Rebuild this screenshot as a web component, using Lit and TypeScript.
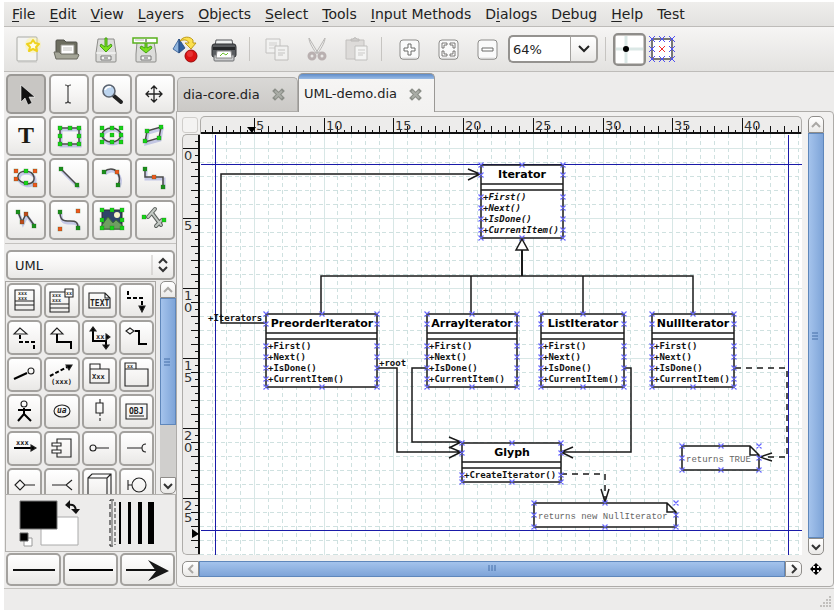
import { LitElement, html, svg, css } from "lit";
import { customElement, property, state } from "lit/decorators.js";
import { classMap } from "lit/directives/class-map.js";
import { styleMap } from "lit/directives/style-map.js";

/* ---------- small drawing helpers ---------- */

const GREEN = "#17d417";
const DARK_GREEN = "#1c8f1c";
const ORANGE = "#f0561c";

const dot = (x: number, y: number, fill = GREEN) =>
  svg`<rect x=${x - 2} y=${y - 2} width="4" height="4" fill=${fill} stroke="#1b5a1b" stroke-opacity=".45" stroke-width=".6"/>`;

const dots = (points: number[][], fill = GREEN) => points.map(([x, y]) => dot(x, y, fill));

const shaded = (d: string, fill = "none") => svg`
  <path d=${d} transform="translate(1 2)" fill="none" stroke="#5663c8" stroke-opacity=".3" stroke-width="3"/>
  <path d=${d} fill=${fill} stroke="#4a4a4a" stroke-width="1.5"/>`;

const cross = (x: number, y: number, r = 2) => `M${x - r} ${y - r}L${x + r} ${y + r}M${x - r} ${y + r}L${x + r} ${y - r}`;

/* ---------- main toolbar ---------- */

const toolbarIcons: Record<string, unknown> = {
  new: svg`
    <path d="M6 4h18q1 0 1 1v22q0 1-1 1H6q-1 0-1-1V5q0-1 1-1z" fill="#f4f4f2" stroke="#a9aaa6"/>
    <path d="M6 29h19" stroke="#c9c9c6"/>
    <circle cx="21" cy="12" r="8" fill="#fff27a" opacity=".35"/>
    <path d="M21 7l2 3 4 1-3 3 1 4-4-2-4 2 1-4-3-3 4-1z" fill="#fffce0" stroke="#efd21d" stroke-width="2" stroke-linejoin="round"/>`,
  open: svg`
    <path d="M5 24V8q0-1 1-1h7l2 2h10q1 0 1 1v14z" fill="#6c6d5f" stroke="#50514a"/>
    <path d="M10 12h13v11H10z" fill="#fff" stroke="#9a9a92"/>
    <path d="M12 15h9M12 17h9" stroke="#c4c4c0"/>
    <path d="M3 19h5l2 2h17l1 1-2 4H5z" fill="#a5a698" stroke="#6a6b60"/>`,
  save: svg`
    <path d="M8 6h16l2 14v8q0 1-1 1H7q-1 0-1-1v-8z" fill="#dcdcda" stroke="#8d8d8a"/>
    <path d="M6 20h20" stroke="#fff"/>
    <path d="M11 23h10v4H11z" fill="#f6f6f5" stroke="#777"/><path d="M14 25h4" stroke="#666"/>
    <path d="M15 5h2v9l4-3 1 2-6 6-6-6 1-2 4 3z" fill="#7be01f" stroke="#45a114"/>`,
  saveas: svg`
    <path d="M8 9h17l2 12v7q0 1-1 1H8q-1 0-1-1v-7z" fill="#dcdcda" stroke="#8d8d8a"/>
    <path d="M12 23h10v4H12z" fill="#f6f6f5" stroke="#777"/><path d="M15 25h4" stroke="#666"/>
    <path d="M16 9h2v6l4-2 1 2-6 5-6-5 1-2 4 2z" fill="#7be01f" stroke="#45a114"/>
    <path d="M4 5h24v5H4z" fill="#fff" stroke="#58b01c" stroke-width="1.5"/>
    <path d="M6 7h9" stroke="#bbb"/><path d="M17 6v3" stroke="#333"/>`,
  export: svg`
    <path d="M11 6L5 16l6 4z" fill="#8fb4dd" stroke="#2c568f" stroke-width=".8"/>
    <path d="M11 6l6 9-6 5z" fill="#2f609f" stroke="#24487a" stroke-width=".8"/>
    <path d="M12 8c3-5 10-5 13-1v3h3l-5 6-6-6h4c-1-3-5-4-9-2z" fill="#fbe04f" stroke="#b8920c" stroke-width=".9"/>
    <circle cx="23" cy="23" r="6" fill="#dc1212" stroke="#9b0808"/>
    <circle cx="22" cy="21" r="3" fill="#f04a4a" opacity=".6"/>`,
  print: svg`
    <path d="M9 7h16l1 6H8z" fill="#eef0f0" stroke="#55575a"/>
    <path d="M7 11h20q2 0 2 3v8q0 2-2 2H7q-2 0-2-2v-8q0-3 2-3z" fill="#5a5d60" stroke="#2e3032"/>
    <path d="M6 14h22v3H6z" fill="#26282a"/>
    <path d="M7 22h20v5q0 1-1 1H8q-1 0-1-1z" fill="#c9cacb" stroke="#6c6e70"/>
    <path d="M10 18h14l1 7H9z" fill="#fff" stroke="#888"/>
    <path d="M13 23l3-3 3 2 2-2" stroke="#6cc02c" fill="none"/>`,
  copy: svg`
    <g opacity=".8"><path d="M5 6h14v14H5z" fill="#f3f3f2" stroke="#b9b8b6"/>
    <path d="M8 10h8M8 12h8M8 15h6" stroke="#c9c8c6"/>
    <path d="M14 13h13v14H14z" fill="#f3f3f2" stroke="#b3b2b0"/>
    <path d="M17 17h7M17 20h7M17 22h5" stroke="#bdbcba"/></g>`,
  cut: svg`
    <path d="M9 5l9 15h-2C12 14 9 9 9 5zM25 5l-9 15h2c4-6 7-11 7-15z" fill="#eeeeed" stroke="#b9b7b5"/>
    <g fill="none" stroke="#b9b0b0" stroke-width="3"><circle cx="12" cy="23" r="3"/><circle cx="22" cy="23" r="3"/></g>`,
  paste: svg`
    <path d="M7 7h18v19H7z" fill="#dddbd9" stroke="#c2c0be"/>
    <path d="M12 8V6h2q2-3 4 0h2v2z" fill="#cfcdcb" stroke="#bcbab8"/>
    <path d="M16 13h12v14H16z" fill="#f4f4f3" stroke="#c0bfbd"/>
    <path d="M19 17h7M19 20h7M19 22h5" stroke="#cccbc9"/>`,
};

const zoomPlate = svg`
  <rect x="7" y="8" width="19" height="19" rx="4" fill="#bcbbb9"/>
  <rect x="7" y="7" width="19" height="19" rx="3" fill="#fafafa" stroke="#8d8c8a"/>
  <path d="M9 25h15" stroke="#e0dfde"/>`;

toolbarIcons.zoomin = svg`${zoomPlate}
  <path d="M15 11h3v4h4v3h-4v4h-3v-4h-4v-3h4z" fill="#fff" stroke="#6b6a68"/>`;
toolbarIcons.zoomfit = svg`${zoomPlate}
  <path d="M10 15v-5h5v2h-3v3zM18 10h5v5h-2v-3h-3zM10 18v5h5v-2h-3v-3zM18 23h5v-5h-2v3h-3z" fill="#fff" stroke="#6b6a68" stroke-width=".9"/>`;
toolbarIcons.zoomout = svg`${zoomPlate}
  <path d="M11 15h11v3H11z" fill="#fff" stroke="#6b6a68"/>`;

/* ---------- toolbox ---------- */

const grid3 = (xs: number[], ys: number[]) =>
  ys.flatMap((y, j) => xs.filter((_, i) => !(i === 1 && j === 1)).map((x) => [x, y]));

const tools: [string, unknown][] = [
  ["Modify", svg`<path d="M15 11v17l4-4 3 7 4-2-3-6h6z" fill="#111" stroke="#fff" stroke-opacity=".7" stroke-width=".8"/>`],
  ["Edit text", svg`<path d="M16 11q3 0 3 2v14q0 2-3 2M22 11q-3 0-3 2v14q0 2 3 2" fill="none" stroke="#444" stroke-width="1.2"/>`],
  ["Magnify", svg`
    <path d="M22 22l7 6" stroke="#222" stroke-width="4" stroke-linecap="round"/>
    <circle cx="17" cy="17" r="6" fill="#bcd4ee" stroke="#5c6470" stroke-width="1.6"/>
    <path d="M13 16q2-4 6-3" stroke="#fff" stroke-width="1.6" fill="none"/>`],
  ["Scroll", svg`<path d="M19 12v15M11 20h16M16 15l3-3 3 3M16 25l3 3 3-3M14 17l-3 3 3 3M24 17l3 3-3 3" fill="none" stroke="#222" stroke-width="1.3"/>`],
  ["Text", svg`<text x="20" y="27" text-anchor="middle" class="serif">T</text>`],
  ["Box", svg`${shaded("M11 12h19v16H11z")}${dots(grid3([11, 21, 30], [12, 20, 28]))}`],
  ["Ellipse", svg`${shaded("M10 19a9.5 7 0 0 1 19 0a9.5 7 0 0 1 -19 0z")}${dots([...grid3([10, 20, 29], [12, 19, 26]), [20, 19]])}`],
  ["Polygon", svg`${shaded("M12 15l14-4-2 11-14 4z")}${dots([[12, 15], [26, 11], [24, 22], [10, 25]])}`],
  ["Beziergon", svg`${shaded("M12 18c1-6 14-7 16 1c1 6-5 8-10 6c-5-2-7-4-6-7z")}${dots([[10, 13], [29, 13], [10, 21], [29, 27]], ORANGE)}${dots([[20, 13], [20, 25]])}`],
  ["Line", svg`${shaded("M12 11l17 17")}${dots([[12, 11], [28, 27]], DARK_GREEN)}`],
  ["Arc", svg`${shaded("M12 14c4-4 10-4 13 0s3 9 1 13")}${dots([[12, 14], [26, 27]], DARK_GREEN)}${dot(25, 14, ORANGE)}`],
  ["Zigzag line", svg`${shaded("M10 11v8h18v10")}${dots([[10, 11], [28, 29]], DARK_GREEN)}${dot(19, 19, ORANGE)}`],
  ["Polyline", svg`${shaded("M12 12l4 10 4-8 8 11")}${dots([[12, 12], [28, 26]], DARK_GREEN)}${dots([[16, 22], [20, 14]], "#c0481c")}`],
  ["Bezier line", svg`${shaded("M11 12c0 9 4 9 10 9s8 1 8 7")}${dots([[11, 12], [29, 28]], DARK_GREEN)}${dots([[29, 11], [11, 29]], ORANGE)}`],
  ["Image", svg`
    <path d="M10 10h20v19H10z" fill="#2f4468" stroke="#2a2f2a"/>
    <circle cx="25" cy="15" r="3" fill="#f6f3c8"/>
    <path d="M10 25l6-8 5 6 3-3 6 5v4H10z" fill="#6f9e62" stroke="#3d6a38"/>
    ${dots(grid3([10, 20, 30], [10, 20, 28]))}`],
  ["Outline", svg`
    <path d="M13 17l7-8M17 13l9 12M21 26l6-6" stroke="#5d625f" stroke-width="4" stroke-linecap="round"/>
    <path d="M13 17l7-8M17 13l9 12M21 26l6-6" stroke="#c3c9c4" stroke-width="2" stroke-linecap="round"/>
    ${dots([[9, 17], [29, 20]])}`],
];

/* ---------- UML palette ---------- */

const shapes: [string, unknown][] = [
  ["Class", svg`<path d="M8 7h19v20H8zM8 18h19M8 22h19"/><text x="11" y="12" class="tiny">xxx</text><text x="11" y="17" class="tiny">xxx</text>`],
  ["Template class", svg`<path d="M6 9h19v20H6zM6 21h19M6 25h19"/><text x="8" y="14" class="tiny">xxx</text><text x="8" y="19" class="tiny">xxx</text><path d="M21 6h8v8h-8z" fill="#fff"/><text x="22" y="12" class="tiny">xx</text>`],
  ["Note", svg`<path d="M7 10h16l5 5v10H7zM23 10v5h5"/><text x="8" y="23" class="wide">TEXT</text>`],
  ["Dependency", svg`<path d="M9 8v7h14v8" class="thick" stroke-dasharray="4 2"/><path d="M20 23h6l-3 6z" class="solid"/>`],
  ["Realizes", svg`<path d="M13 8l-6 6h13z"/><path d="M13 15v7h14v7" class="thick" stroke-dasharray="4 2"/>`],
  ["Generalization", svg`<path d="M13 8l-6 6h12z"/><path d="M13 14v8h14v7" class="thick"/>`],
  ["Association", svg`<path d="M11 9v12h13v6" class="thick"/><path d="M8 11l3-4 3 4zM21 25h6l-3 4zM24 14l4 3-4 3z" class="solid"/><text x="14" y="19">xx</text>`],
  ["Aggregation", svg`<path d="M7 11l4-3 4 3-4 3zM15 11h5" /><path d="M16 11h4v13h8" class="thick"/>`],
  ["Implements", svg`<path d="M7 22l13-6" class="thick"/><circle cx="24" cy="14" r="3"/>`],
  ["Constraint", svg`<path d="M6 19l17-9" class="thick" stroke-dasharray="4 2"/><path d="M22 8h6l-3 5z" class="solid"/><text x="7" y="27">(xxx)</text>`],
  ["Small package", svg`<path d="M8 12h19v14H8zM8 12V7h10v5"/><text x="10" y="22">Xxx</text>`],
  ["Large package", svg`<path d="M6 12h23v17H6zM6 12V6h11v6"/><text x="8" y="11" class="tiny">xx</text>`],
  ["Actor", svg`<circle cx="17" cy="10" r="3"/><path d="M17 14v6M11 16h13M17 20l-6 7M17 20l7 7" class="thick"/>`],
  ["Use case", svg`<ellipse cx="18" cy="17" rx="8" ry="6"/><text x="13" y="19" class="slant">ua</text>`],
  ["Lifeline", svg`<path d="M14 9h7v10h-7zM18 5v4"/><path d="M18 19v9" stroke-dasharray="3 2"/>`],
  ["Object", svg`<path d="M7 10h21v15H7z"/><text x="10" y="20" class="wide">OBJ</text><path d="M10 22h15"/>`],
  ["Message", svg`<path d="M7 17h18" class="thick"/><path d="M24 14l5 3-5 3z" class="solid"/><text x="9" y="14">xxx</text>`],
  ["Component", svg`<path d="M13 8h14v18H13z"/><path d="M8 12h9v3H8zM8 19h9v3H8z" fill="#fff"/>`],
  ["Provided interface", svg`<circle cx="11" cy="17" r="3"/><path d="M14 17h13"/>`],
  ["Required interface", svg`<path d="M8 17h15M27 13q-4 0-4 4t4 4"/>`],
  ["Composition", svg`<path d="M8 17l5-5 5 5-5 5zM18 17h10"/>`],
  ["Fork", svg`<path d="M8 17h14M28 12l-6 5 6 5"/>`],
  ["Node", svg`<path d="M6 10h19v25H6zM6 10l4-4h19v25M29 6l-4 4"/>`],
  ["Boundary", svg`<path d="M9 12v10M9 17h4"/><circle cx="20" cy="17" r="7"/>`],
];

/* ---------- diagram content ---------- */

interface UmlClass { name: string; x: number; y: number; w: number; h: number; ops: string[]; abstract?: boolean }

const OPS = ["+First()", "+Next()", "+IsDone()", "+CurrentItem()"];
const classes: UmlClass[] = [
  { name: "Iterator", x: 481, y: 165, w: 82, h: 73, ops: OPS, abstract: true },
  { name: "PreorderIterator", x: 266, y: 314, w: 111, h: 73, ops: OPS },
  { name: "ArrayIterator", x: 427, y: 314, w: 90, h: 73, ops: OPS },
  { name: "ListIterator", x: 541, y: 314, w: 83, h: 73, ops: OPS },
  { name: "NullIterator", x: 652, y: 314, w: 82, h: 73, ops: OPS },
  { name: "Glyph", x: 462, y: 443, w: 99, h: 39, ops: ["+CreateIterator()"] },
];
const notes = [
  { text: "returns TRUE", x: 682, y: 446, w: 77, h: 24 },
  { text: "returns new NullIterator", x: 534, y: 503, w: 142, h: 24 },
];

/* Screen position of a diagram unit */
const unitX = (n: number) => Math.round(184 + n * 13.95);
const unitY = (n: number) => Math.round(148 + n * 14);

const range = (from: number, to: number, step = 1) =>
  Array.from({ length: Math.max(0, Math.floor((to - from) / step) + 1) }, (_, i) => from + i * step);

const drawClass = (c: UmlClass) => {
  const mid = c.x + Math.round(c.w / 2);
  const rows = c.ops.map((_, i) => c.y + 32 + i * 11);
  const handles = [
    ...[c.y, c.y + c.h].flatMap((y) => [c.x, mid, c.x + c.w].map((x) => cross(x, y, 2.5))),
    ...[c.y + 10, ...rows].flatMap((y) => [c.x, c.x + c.w].map((x) => cross(x, y, 2.5))),
  ].join("");
  return svg`
    <rect x=${c.x} y=${c.y} width=${c.w} height=${c.h} class="box"/>
    <path d="M${c.x} ${c.y + 19}h${c.w}M${c.x} ${c.y + 25}h${c.w}" class="wire"/>
    <text x=${mid} y=${c.y + 13} class="title" text-anchor="middle">${c.name}</text>
    <path d=${handles} class="handle"/>
    ${c.ops.map((op, i) => svg`<text x=${c.x + 2} y=${c.y + 35 + i * 11} class=${c.abstract ? "op abstract" : "op"}>${op}</text>`)}`;
};

const drawNote = (n: (typeof notes)[number]) => {
  const right = n.x + n.w;
  const bottom = n.y + n.h;
  const handles = [n.y, n.y + 12, bottom]
    .flatMap((y, j) => [n.x, n.x + Math.round(n.w / 2), right].filter((_, i) => !(i === 1 && j === 1)).map((x) => cross(x, y, 2.5)))
    .join("");
  return svg`
    <path d="M${n.x} ${n.y}H${right - 9}l9 9V${bottom}H${n.x}zM${right - 9} ${n.y}v9h9" class="box"/>
    <text x=${n.x + 4} y=${n.y + 16} class="note">${n.text}</text>
    <path d=${handles} class="handle"/>`;
};

const buttonFace = css`
  button, select, input { font: inherit; color: inherit; margin: 0; padding: 0; }
  .face {
    border: 2px solid #a3a19e; border-radius: 5px;
    background: linear-gradient(#ffffff, #f6f5f4 50%, #e9e8e6);
    display: flex; align-items: center; justify-content: center; overflow: hidden;
  }
  svg { display: block; flex: none; }
`;

/* ---------- scrollbar ---------- */

@customElement("dia-scrollbar")
class DiaScrollbar extends LitElement {
  @property({ type: Boolean, reflect: true }) horizontal = false;
  @property({ type: Number }) thumb = 100;

  static styles = [buttonFace, css`
    :host { display: flex; flex-direction: column; box-sizing: border-box; min-width: 0; min-height: 0; }
    :host([horizontal]) { flex-direction: row; }
    .end { flex: 0 0 17px; box-sizing: border-box; border-width: 1px; border-color: #8f8d8a; width: 16px; height: 17px; }
    :host([horizontal]) .end { width: 17px; height: 16px; }
    .first { border-radius: 5px 5px 0 0; }
    .last { border-radius: 0 0 5px 5px; }
    :host([horizontal]) .first { border-radius: 5px 0 0 5px; }
    :host([horizontal]) .last { border-radius: 0 5px 5px 0; }
    .trough { flex: 1; display: flex; flex-direction: column; background: #d0cfcd; min-height: 0; }
    :host([horizontal]) .trough { flex-direction: row; }
    .thumb {
      box-sizing: border-box; border: 1px solid #5f87bb; display: flex; align-items: center; justify-content: center;
      background: linear-gradient(to right, #a4c3ec, #7ea4d8);
    }
    :host([horizontal]) .thumb { background: linear-gradient(#a4c3ec, #7ea4d8); }
  `];

  render() {
    const arrows = this.horizontal ? ["M10 4L6 8l4 4", "M6 4l4 4-4 4"] : ["M4 10l4-4 4 4", "M4 6l4 4 4-4"];
    const grip = this.horizontal ? "M1 0v6M4 0v6M7 0v6" : "M0 1h6M0 4h6M0 7h6";
    return html`
      <button class="face end first" aria-label="Scroll back">
        <svg width="16" height="16"><path d=${arrows[0]} fill="none" stroke="#aaa8a5" stroke-width="2"/></svg>
      </button>
      <div class="trough">
        <div class="thumb" style=${styleMap({ flexBasis: `${this.thumb}%` })}>
          <svg width="8" height="8"><path d=${grip} stroke="#456fa8"/></svg>
        </div>
      </div>
      <button class="face end last" aria-label="Scroll on">
        <svg width="16" height="16"><path d=${arrows[1]} fill="none" stroke="#333" stroke-width="2"/></svg>
      </button>`;
  }
}

/* ---------- menu and toolbar ---------- */

@customElement("dia-menubar")
class DiaMenubar extends LitElement {
  static styles = css`
    :host { display: block; }
    nav { display: flex; gap: 14px; padding: 0 8px; height: 24px; align-items: center; overflow: hidden;
      background: linear-gradient(#efeeec, #e3e2e0); border-bottom: 1px solid #bebcb9; }
    button { font: inherit; font-size: 14px; line-height: 20px; color: #222; border: 0; padding: 0; background: none; white-space: nowrap; }
    u { text-underline-offset: 2px; text-decoration-skip-ink: none; }
  `;
  render() {
    const items = ["_File", "_Edit", "_View", "_Layers", "_Objects", "_Select", "_Tools", "_Input Methods", "D_ialogs", "D_ebug", "_Help", "Test"];
    return html`<nav>${items.map((item) => {
      const at = item.indexOf("_");
      return html`<button>${at < 0 ? item : html`${item.slice(0, at)}<u>${item[at + 1]}</u>${item.slice(at + 2)}`}</button>`;
    })}</nav>`;
  }
}

@customElement("dia-toolbar")
class DiaToolbar extends LitElement {
  static styles = [buttonFace, css`
    :host { display: block; }
    .bar { display: flex; align-items: center; height: 44px; padding-left: 4px; overflow: hidden;
      background: linear-gradient(#f6f5f4, #e3e2e0); border-bottom: 1px solid #bebcb9; }
    .tool { width: 39px; height: 40px; border: 0; background: none; display: flex; align-items: center; justify-content: center; flex: none; }
    .sep { flex: none; width: 1px; height: 24px; margin: 0 7px; background: #c6c4c1; }
    .combo { flex: none; display: flex; width: 90px; height: 28px; box-sizing: border-box; margin-left: 2px; }
    .combo input { width: 0; flex: 1; box-sizing: border-box; border: 2px solid #94928f; border-right-width: 0; border-radius: 5px 0 0 5px; background: #fff; padding-left: 3px; font-size: 13px; }
    .drop { width: 28px; box-sizing: border-box; border-width: 2px; border-left: 1px solid #a3a19e; border-radius: 0 5px 5px 0; }
    .toggle { flex: none; width: 33px; height: 33px; background: #c9c7c4; box-sizing: border-box; border-color: #8f8d8a; }
    .snap { flex: none; width: 28px; height: 28px; margin-left: 2px; border: 0; background: none; }
  `];
  private group(names: string[]) {
    return names.map((name) => html`<button class="tool" aria-label=${name}>
      <svg width="32" height="32" fill="none">${toolbarIcons[name]}</svg></button>`);
  }
  render() {
    const marks = [4, 14, 24].flatMap((y) => [4, 14, 24].map((x) => [x, y])).filter(([x, y]) => !(x === 14 && y === 14));
    return html`<div class="bar">
      ${this.group(["new", "open", "save", "saveas", "export", "print"])}
      <span class="sep"></span>
      ${this.group(["copy", "cut", "paste"])}
      <span class="sep"></span>
      ${this.group(["zoomin", "zoomfit", "zoomout"])}
      <div class="combo">
        <input type="text" aria-label="Zoom" .value=${"64%"}>
        <button class="face drop" aria-label="Zoom levels"><svg width="14" height="12"><path d="M2 3l5 5 5-5" fill="none" stroke="#222" stroke-width="2"/></svg></button>
      </div>
      <span class="sep"></span>
      <button class="face toggle" aria-label="Snap to grid" aria-pressed="true">
        <svg width="27" height="27"><path d="M0 0h27v27H0z" fill="#fff"/><path d="M10 0v27M0 13h27" stroke="#dbe8e6" stroke-width="3"/><circle cx="10" cy="13" r="3" fill="#000"/></svg>
      </button>
      <button class="snap" aria-label="Snap to objects">
        <svg width="28" height="28"><path d="M4 4h20v20H4z" fill="#fff" stroke="#777" stroke-width="2"/>
          <path d=${marks.map(([x, y]) => cross(x, y, 3)).join("")} stroke="#5050f0" fill="none"/>
          <path d=${cross(14, 14, 3)} stroke="#f03030" fill="none"/></svg>
      </button>
    </div>`;
  }
}

/* ---------- toolbox column ---------- */

@customElement("dia-toolbox")
class DiaToolbox extends LitElement {
  static styles = [buttonFace, css`
    :host { display: flex; flex-direction: column; box-sizing: border-box; width: 172px; padding: 2px 0 2px 1px; min-height: 0; }
    .tools { display: grid; grid-template-columns: repeat(4, 1fr); gap: 2px 3px; margin: 0 1px; }
    .tool { height: 40px; box-sizing: border-box; }
    .active { background: #c8c6c3; border-color: #9b9996; }
    .serif { font: bold 24px "Liberation Serif", serif; fill: #1c1a14; }
    hr { width: 100%; height: 1px; border: 0; background: #c4c2bf; margin: 3px 0 6px; flex: none; }
    .sheet { position: relative; margin: 0 1px 1px; flex: none; }
    select { appearance: none; width: 100%; height: 30px; padding-left: 7px; font-size: 13px; text-align: left; box-sizing: border-box;
      border: 2px solid #a3a19e; border-radius: 5px; background: linear-gradient(#fff, #f6f5f4 50%, #e9e8e6); }
    .updown { position: absolute; right: 6px; top: 5px; pointer-events: none; }
    .palette { flex: 1; display: flex; gap: 4px; min-height: 0; }
    .shapes { flex: 1; border: 1px solid #a9a7a4; border-bottom: 0; padding: 1px; overflow: hidden; display: grid; grid-template-columns: repeat(4, 1fr); grid-auto-rows: 35px; gap: 2px; align-content: start; }
    .shape { min-width: 0; }
    .shape svg { fill: none; stroke: #222; stroke-width: 1.1; }
    .shape text { font: bold 7px "DejaVu Sans Mono", monospace; fill: #222; stroke: none; }
    .shape .slant { font-style: italic; font-size: 8px; }
    .shape .tiny { font-size: 5px; }
    .shape .wide { font-size: 8px; }
    .shape .thick { stroke-width: 2; stroke: #000; }
    .shape .solid { fill: #000; }
    .colors { flex: none; display: flex; justify-content: space-between; border: 1px solid #b3b1ae; height: 56px; margin-bottom: 1px; }
    .colors button { border: 0; background: none; }
    .lines { display: grid; grid-template-columns: repeat(3, 1fr); gap: 2px; margin: 0 1px; flex: none; }
    .line { height: 33px; box-sizing: border-box; }
    dia-scrollbar { flex: none; width: 16px; }
  `];
  render() {
    return html`
      <div class="tools">${tools.map(([name, icon], i) => html`
        <button class=${classMap({ face: true, tool: true, active: i === 0 })} aria-label=${name}>
          <svg width="40" height="40" viewBox="0 0 40 40" fill="none">${icon}</svg>
        </button>`)}</div>
      <hr>
      <div class="sheet">
        <select aria-label="Sheet"><option>UML</option></select>
        <svg class="updown" width="18" height="20"><path d="M1 0v20" stroke="#c4c2bf"/><path d="M8 8l4-4 4 4M8 12l4 4 4-4" fill="none" stroke="#333" stroke-width="2"/></svg>
      </div>
      <div class="palette">
        <div class="shapes">${shapes.map(([name, icon]) => html`
          <button class="face shape" aria-label=${name}><svg width="35" height="35">${icon}</svg></button>`)}</div>
        <dia-scrollbar .thumb=${71}></dia-scrollbar>
      </div>
      <div class="colors">
        <button aria-label="Foreground and background colours">
          <svg width="78" height="56">
            <path d="M35 22h37v28H35z" fill="#fff" stroke="#aaa"/>
            <path d="M14 6h37v28H14z" fill="#000" stroke="#777"/>
            <path d="M18 43h8v8h-8z" fill="#fff" stroke="#999"/>
            <path d="M14 38h8v8h-8z" fill="#000" stroke="#666"/>
            <path d="M62 10q8-2 8 7" fill="none" stroke="#111" stroke-width="2"/>
            <path d="M59 10l5-5v9zM65 14h9l-4 5z" fill="#111"/>
          </svg>
        </button>
        <button aria-label="Line width">
          <svg width="66" height="56">
            <path d="M5 5H1v46h4" fill="none" stroke="#111" stroke-dasharray="5 3"/>
            <path d="M3 6v44" stroke="#555"/><path d="M6 7v43" stroke="#333" stroke-dasharray="4 2"/>
            <path d="M10 7h2v42h-2zM19 7h3v42h-3zM29 7h4v42h-4zM39 7h6v42h-6z" fill="#000"/>
          </svg>
        </button>
      </div>
      <div class="lines">
        <button class="face line" aria-label="Start arrow"><svg width="50" height="28"><path d="M4 14h42" stroke="#111" stroke-width="2"/></svg></button>
        <button class="face line" aria-label="Line style"><svg width="50" height="28"><path d="M3 14h44" stroke="#000" stroke-width="2"/></svg></button>
        <button class="face line" aria-label="End arrow"><svg width="50" height="28"><path d="M3 14h32" stroke="#111" stroke-width="2"/><path d="M25 4l21 11-21 10 8-10z" fill="#181818"/></svg></button>
      </div>`;
  }
}

/* ---------- drawing area with rulers ---------- */

@customElement("dia-display")
class DiaDisplay extends LitElement {
  @state() private columns = 44;
  @state() private rows = 29;
  private observer?: ResizeObserver;

  static styles = [buttonFace, css`
    :host { display: flex; flex-direction: column; min-width: 0; min-height: 0; box-sizing: border-box; }
    .tabs { display: flex; align-items: flex-end; height: 38px; padding-left: 1px; padding-top: 1px; flex: none; }
    .tab { display: flex; align-items: center; justify-content: space-between; box-sizing: border-box; height: 34px; width: 121px; padding: 0 12px 0 5px;
      border: 1px solid #aeaca9; border-bottom: 0; border-radius: 5px 5px 0 0; background: linear-gradient(#d9d8d6, #cbc9c6); }
    .current { position: relative; z-index: 1; height: 39px; width: 137px; padding-top: 2px; margin-bottom: -1px; border-color: #9a9895;
      background: linear-gradient(#5f8cc8, #9bbce6 5px, #f6f5f4 5px, #f2f1f0); }
    .tab button { border: 0; background: none; font-size: 13px; line-height: 20px; color: #222; white-space: nowrap; }
    .page { flex: 1; min-height: 0; display: grid; grid-template-columns: 18px minmax(0, 1fr) 22px; grid-template-rows: 18px minmax(0, 1fr) 22px;
      padding: 4px 9px 9px 5px; border: 1px solid #aeaca9; border-radius: 0 4px 4px 4px; background: #f2f1f0; margin-bottom: 1px; }
    .corner { width: 16px; height: 16px; border: 1px solid #d0cecb; border-radius: 3px; box-sizing: border-box; margin-top: 1px; background: #f4f3f2; }
    .page > svg { width: 100%; height: 100%; overflow: hidden; }
    .ruler { background: #edeceb; border: 1px solid #aeaca9; box-sizing: border-box; font: 13px "DejaVu Sans", sans-serif; fill: #333; }
    .top { border-bottom: 0; border-radius: 5px 5px 0 0; }
    .side { border-right: 0; border-radius: 5px 0 0 5px; }
    .canvas { background: #fff; }
    .vertical { grid-column: 3; grid-row: 1 / 3; margin-left: 6px; width: 16px; }
    .across { grid-column: 1 / 3; grid-row: 3; margin-top: 6px; }
    .nav { grid-column: 3; grid-row: 3; margin: 6px 0 0 6px; border: 0; background: none; width: 16px; height: 16px; }
    .tick { stroke: #111; shape-rendering: crispEdges; fill: none; }
    .dashed { stroke: #cfe1e0; stroke-dasharray: 4 3; fill: none; shape-rendering: crispEdges; }
    .major { stroke: #d8e7e6; fill: none; shape-rendering: crispEdges; }
    .guide { stroke: #1a1aa8; fill: none; shape-rendering: crispEdges; }
    .wire { stroke: #1a1a1a; stroke-width: 1.5; fill: none; }
    .broken { stroke-dasharray: 6 5; }
    .bold { stroke-width: 2; }
    .box { stroke: #1a1a1a; stroke-width: 1.5; fill: #fff; }
    .handle { stroke: #6868ff; stroke-width: 1.2; fill: none; }
    .title { font: bold 11px "DejaVu Sans", sans-serif; fill: #000; }
    .op { font: bold 9px "DejaVu Sans Mono", monospace; fill: #111; }
    .abstract { font-style: italic; }
    .note { font: 9px "Liberation Mono", monospace; fill: #666; }
  `];

  connectedCallback() {
    super.connectedCallback();
    this.observer = new ResizeObserver(([entry]) => {
      this.columns = Math.floor((entry.contentRect.width - 40) / 13.95);
      this.rows = Math.floor((entry.contentRect.height - 107) / 14);
    });
    this.observer.observe(this);
  }

  disconnectedCallback() {
    this.observer?.disconnect();
    super.disconnectedCallback();
  }

  private tab(name: string, current: boolean) {
    return html`<div class=${classMap({ tab: true, current })}>
      <button role="tab" aria-selected=${current ? "true" : "false"}>${name}</button>
      <button aria-label="Close ${name}"><svg width="13" height="13"><path d="M3 3l7 7M10 3l-7 7" stroke="#8b8e88" stroke-width="4" stroke-linecap="square"/><path d="M3 3l7 7M10 3l-7 7" stroke="#a9aca6" stroke-width="2"/></svg></button>
    </div>`;
  }

  private rulers() {
    const top = range(1.5, this.columns + 1, 0.5).map((n) => `M${unitX(n)} ${n % 5 === 0 ? 118 : n % 1 === 0 ? 126 : 130}V134`).join("");
    const side = range(-1, this.rows + 1, 0.5).map((n) => `M${n % 5 === 0 ? 183 : n % 1 === 0 ? 191 : 195} ${unitY(n)}H199`).join("");
    return html`
      <svg class="ruler top"><g transform="translate(-201 -117)">
        <path class="tick" d=${top}/>
        <path d="M201 133H4000" class="tick" stroke-width="2"/>
        <path d="M247 127h9l-4 6z" fill="#000"/>
        ${range(5, this.columns - 1, 5).map((n) => svg`<text x=${unitX(n) + 2} y="130">${n}</text>`)}
      </g></svg>
      <svg class="ruler side"><g transform="translate(-183 -135)">
        <path class="tick" d=${side}/>
        <path d="M199 134V3000" class="tick" stroke-width="2"/>
        <path d="M192 529v9l7-4z" fill="#000"/>
        ${range(0, this.rows - 2, 5).map((n) => [...String(n)].map((digit, i) => svg`<text x="184" y=${unitY(n) + 12 + i * 12}>${digit}</text>`))}
      </g></svg>`;
  }

  private diagram() {
    const gridLines = (major: boolean) => [
      ...range(2, this.columns + 1).filter((n) => (n % 5 === 0) === major).map((n) => `M${unitX(n)} 134V3000`),
      ...range(0, this.rows + 1).filter((n) => (n % 5 === 0) === major).map((n) => `M200 ${unitY(n)}H4000`),
    ].join("");
    return html`<svg class="canvas" role="img" aria-label="UML class diagram"><g transform="translate(-200 -134)">
      <path class="dashed" d=${gridLines(false)}/>
      <path class="major" d=${gridLines(true)}/>
      <path class="guide" d="M215 135V3000M788 135V3000M201 164H4000M201 530H4000"/>
      <path class="wire" d="M266 323H221V174H480M468 169l12 5-12 6"/>
      <path class="wire" d="M321 314V276H693V314M471 276V314M583 276V314"/>
      <path class="wire" d="M377 368H397V452H461M449 447l12 5-12 6"/>
      <path class="wire" d="M427 368H412V442H461M449 437l12 5-12 6"/>
      <path class="wire" d="M624 368H631V452H562M573 447l-12 5 12 6"/>
      <path class="wire broken" d="M735 368H787V457H760"/>
      <path class="wire" d="M772 453l-12 4 12 4"/>
      <path class="wire broken" d="M561 474H605V502"/>
      <path class="wire" d="M601 489l4 13 4-13"/>
      ${classes.map(drawClass)}
      ${notes.map(drawNote)}
      <path class="wire bold" d="M522 250V276"/>
      <path class="box" d="M522 239l6 11h-12z"/>
      <text x="208" y="321" class="op">+Iterators</text>
      <text x="379" y="366" class="op">+root</text>
    </g></svg>`;
  }

  render() {
    return html`
      <div class="tabs" role="tablist">${this.tab("dia-core.dia", false)}${this.tab("UML-demo.dia", true)}</div>
      <div class="page">
        <div class="corner"></div>
        ${this.rulers()}${this.diagram()}
        <dia-scrollbar class="vertical"></dia-scrollbar>
        <dia-scrollbar class="across" horizontal></dia-scrollbar>
        <button class="nav" aria-label="Navigate"><svg width="16" height="16"><path d="M8 3v10M3 8h10" stroke="#000" stroke-width="2"/><path d="M5 5l3-3 3 3zM5 11l3 3 3-3zM5 5L2 8l3 3zM11 5l3 3-3 3z" fill="#000"/></svg></button>
      </div>`;
  }
}

/* ---------- window ---------- */

@customElement("app-root")
class AppRoot extends LitElement {
  static styles = css`
    :host { display: flex; flex-direction: column; box-sizing: border-box; height: 100vh; padding: 2px 1px 4px 4px;
      background: #fff; font: 13px "DejaVu Sans", sans-serif; color: #222; }
    .main { flex: 1; min-height: 0; display: grid; grid-template-columns: 172px minmax(0, 1fr); background: #edeceb; }
    footer { display: flex; justify-content: flex-end; align-items: flex-end; box-sizing: border-box; height: 22px; padding: 2px; background: #edeceb; border-top: 1px solid #c4c2bf; }
  `;
  render() {
    const grip = range(0, 3).flatMap((row) => range(3 - row, 3).map((col) => [col * 3, row * 3]));
    return html`
      <dia-menubar></dia-menubar>
      <dia-toolbar></dia-toolbar>
      <div class="main"><dia-toolbox></dia-toolbox><dia-display></dia-display></div>
      <footer><svg width="12" height="12">${grip.map(([x, y]) => svg`<rect x=${x} y=${y} width="2" height="2" fill="#c2c0bd"/>`)}</svg></footer>`;
  }
}
